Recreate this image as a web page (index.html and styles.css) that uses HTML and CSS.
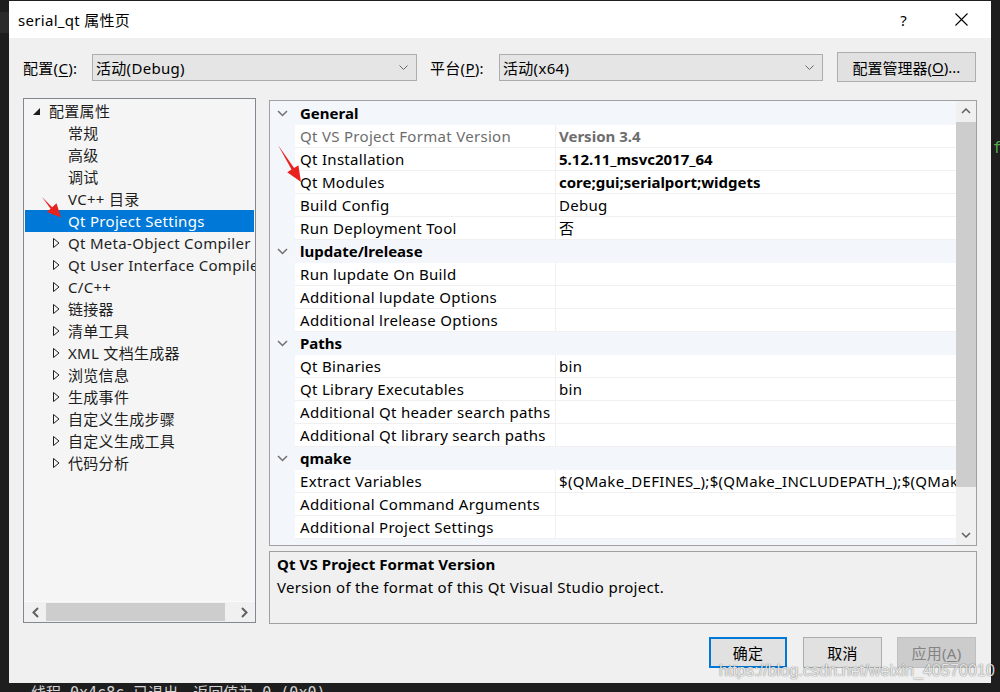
FILE: index.html
```html
<!DOCTYPE html>
<html lang="zh-CN">
<head>
<meta charset="utf-8">
<title>serial_qt 属性页</title>
<link rel="stylesheet" href="styles.css">
</head>
<body>
<div class="screen">
  <div class="edge-left"><div class="edge-left-hi"></div></div>
  <div class="dialog">
    <div class="titlebar">
      <span class="title">serial_qt 属性页</span>
      <span class="help">?</span>
      <svg class="close" width="13" height="13" viewBox="0 0 13 13"><path d="M0.5 0.5L12.5 12.5M12.5 0.5L0.5 12.5" stroke="#000" stroke-width="1.1" fill="none"/></svg>
    </div>
    <div class="content">
      <div class="config-row">
        <span class="lbl">配置(<u>C</u>):</span>
        <div class="combo combo-cfg"><span class="combo-text">活动(Debug)</span><svg width="9" height="5" viewBox="0 0 9 5"><path d="M0.5 0.5L4.5 4.5L8.5 0.5" fill="none" stroke="#6a6a6a" stroke-width="1"/></svg></div>
        <span class="lbl lbl-plat">平台(<u>P</u>):</span>
        <div class="combo combo-plat"><span class="combo-text">活动(x64)</span><svg width="9" height="5" viewBox="0 0 9 5"><path d="M0.5 0.5L4.5 4.5L8.5 0.5" fill="none" stroke="#6a6a6a" stroke-width="1"/></svg></div>
        <div class="btn btn-mgr">配置管理器(<u>O</u>)...</div>
      </div>

      <div class="main">
        <div class="tree">
          <div class="tree-items">
            <div class="trow root"><span class="exp"><svg width="7" height="7" viewBox="0 0 7 7"><polygon points="7,0 7,7 0,7" fill="#1e1e1e"/></svg></span><span>配置属性</span></div>
            <div class="trow child"><span class="exp"></span><span>常规</span></div>
            <div class="trow child"><span class="exp"></span><span>高级</span></div>
            <div class="trow child"><span class="exp"></span><span>调试</span></div>
            <div class="trow child"><span class="exp"></span><span>VC++ 目录</span></div>
            <div class="trow child selected"><span class="exp"></span><span>Qt Project Settings</span></div>
            <div class="trow child"><span class="exp"><svg width="7" height="10" viewBox="0 0 7 10"><polygon points="0.5,0.5 6,5 0.5,9.5" fill="none" stroke="#1e1e1e" stroke-width="1"/></svg></span><span>Qt Meta-Object Compiler</span></div>
            <div class="trow child"><span class="exp"><svg width="7" height="10" viewBox="0 0 7 10"><polygon points="0.5,0.5 6,5 0.5,9.5" fill="none" stroke="#1e1e1e" stroke-width="1"/></svg></span><span>Qt User Interface Compiler</span></div>
            <div class="trow child"><span class="exp"><svg width="7" height="10" viewBox="0 0 7 10"><polygon points="0.5,0.5 6,5 0.5,9.5" fill="none" stroke="#1e1e1e" stroke-width="1"/></svg></span><span>C/C++</span></div>
            <div class="trow child"><span class="exp"><svg width="7" height="10" viewBox="0 0 7 10"><polygon points="0.5,0.5 6,5 0.5,9.5" fill="none" stroke="#1e1e1e" stroke-width="1"/></svg></span><span>链接器</span></div>
            <div class="trow child"><span class="exp"><svg width="7" height="10" viewBox="0 0 7 10"><polygon points="0.5,0.5 6,5 0.5,9.5" fill="none" stroke="#1e1e1e" stroke-width="1"/></svg></span><span>清单工具</span></div>
            <div class="trow child"><span class="exp"><svg width="7" height="10" viewBox="0 0 7 10"><polygon points="0.5,0.5 6,5 0.5,9.5" fill="none" stroke="#1e1e1e" stroke-width="1"/></svg></span><span>XML 文档生成器</span></div>
            <div class="trow child"><span class="exp"><svg width="7" height="10" viewBox="0 0 7 10"><polygon points="0.5,0.5 6,5 0.5,9.5" fill="none" stroke="#1e1e1e" stroke-width="1"/></svg></span><span>浏览信息</span></div>
            <div class="trow child"><span class="exp"><svg width="7" height="10" viewBox="0 0 7 10"><polygon points="0.5,0.5 6,5 0.5,9.5" fill="none" stroke="#1e1e1e" stroke-width="1"/></svg></span><span>生成事件</span></div>
            <div class="trow child"><span class="exp"><svg width="7" height="10" viewBox="0 0 7 10"><polygon points="0.5,0.5 6,5 0.5,9.5" fill="none" stroke="#1e1e1e" stroke-width="1"/></svg></span><span>自定义生成步骤</span></div>
            <div class="trow child"><span class="exp"><svg width="7" height="10" viewBox="0 0 7 10"><polygon points="0.5,0.5 6,5 0.5,9.5" fill="none" stroke="#1e1e1e" stroke-width="1"/></svg></span><span>自定义生成工具</span></div>
            <div class="trow child"><span class="exp"><svg width="7" height="10" viewBox="0 0 7 10"><polygon points="0.5,0.5 6,5 0.5,9.5" fill="none" stroke="#1e1e1e" stroke-width="1"/></svg></span><span>代码分析</span></div>
          </div>
          <div class="hscroll">
            <div class="sbtn"><svg width="7" height="11" viewBox="0 0 7 11"><path d="M6 1L1.5 5.5L6 10" fill="none" stroke="#606060" stroke-width="2"/></svg></div>
            <div class="hthumb"></div>
            <div class="hspace"></div>
            <div class="sbtn"><svg width="7" height="11" viewBox="0 0 7 11"><path d="M1 1L5.5 5.5L1 10" fill="none" stroke="#606060" stroke-width="2"/></svg></div>
          </div>
        </div>

        <div class="right">
          <div class="grid">
            <div class="grid-rows">
              <div class="cat"><span class="gut"><svg width="11" height="7" viewBox="0 0 11 7"><path d="M1 1L5.5 5.5L10 1" fill="none" stroke="#717171" stroke-width="1.5"/></svg></span><span class="cat-name">General</span></div>
              <div class="prop ro"><span class="gut"></span><span class="name">Qt VS Project Format Version</span><span class="val b">Version 3.4</span></div>
              <div class="prop"><span class="gut"></span><span class="name">Qt Installation</span><span class="val b">5.12.11_msvc2017_64</span></div>
              <div class="prop"><span class="gut"></span><span class="name">Qt Modules</span><span class="val b">core;gui;serialport;widgets</span></div>
              <div class="prop"><span class="gut"></span><span class="name">Build Config</span><span class="val">Debug</span></div>
              <div class="prop"><span class="gut"></span><span class="name">Run Deployment Tool</span><span class="val">否</span></div>

              <div class="cat"><span class="gut"><svg width="11" height="7" viewBox="0 0 11 7"><path d="M1 1L5.5 5.5L10 1" fill="none" stroke="#717171" stroke-width="1.5"/></svg></span><span class="cat-name">lupdate/lrelease</span></div>
              <div class="prop"><span class="gut"></span><span class="name">Run lupdate On Build</span><span class="val"></span></div>
              <div class="prop"><span class="gut"></span><span class="name">Additional lupdate Options</span><span class="val"></span></div>
              <div class="prop"><span class="gut"></span><span class="name">Additional lrelease Options</span><span class="val"></span></div>

              <div class="cat"><span class="gut"><svg width="11" height="7" viewBox="0 0 11 7"><path d="M1 1L5.5 5.5L10 1" fill="none" stroke="#717171" stroke-width="1.5"/></svg></span><span class="cat-name">Paths</span></div>
              <div class="prop"><span class="gut"></span><span class="name">Qt Binaries</span><span class="val">bin</span></div>
              <div class="prop"><span class="gut"></span><span class="name">Qt Library Executables</span><span class="val">bin</span></div>
              <div class="prop"><span class="gut"></span><span class="name">Additional Qt header search paths</span><span class="val"></span></div>
              <div class="prop"><span class="gut"></span><span class="name">Additional Qt library search paths</span><span class="val"></span></div>

              <div class="cat"><span class="gut"><svg width="11" height="7" viewBox="0 0 11 7"><path d="M1 1L5.5 5.5L10 1" fill="none" stroke="#717171" stroke-width="1.5"/></svg></span><span class="cat-name">qmake</span></div>
              <div class="prop"><span class="gut"></span><span class="name">Extract Variables</span><span class="val">$(QMake_DEFINES_);$(QMake_INCLUDEPATH_);$(QMake_LIBS_)</span></div>
              <div class="prop"><span class="gut"></span><span class="name">Additional Command Arguments</span><span class="val"></span></div>
              <div class="prop"><span class="gut"></span><span class="name">Additional Project Settings</span><span class="val"></span></div>

              <div class="cat"><span class="gut"><svg width="11" height="7" viewBox="0 0 11 7"><path d="M1 1L5.5 5.5L10 1" fill="none" stroke="#717171" stroke-width="1.5"/></svg></span><span class="cat-name">QML</span></div>
            </div>
            <div class="vscroll">
              <div class="vbtn"><svg width="10" height="6" viewBox="0 0 10 6"><path d="M1 5L5 1L9 5" fill="none" stroke="#606060" stroke-width="1.5"/></svg></div>
              <div class="vthumb"></div>
              <div class="vspace"></div>
              <div class="vbtn"><svg width="10" height="6" viewBox="0 0 10 6"><path d="M1 1L5 5L9 1" fill="none" stroke="#606060" stroke-width="1.5"/></svg></div>
            </div>
          </div>
          <div class="desc">
            <div class="desc-title">Qt VS Project Format Version</div>
            <div class="desc-text">Version of the format of this Qt Visual Studio project.</div>
          </div>
        </div>
      </div>

      <div class="buttons">
        <div class="btn btn-ok">确定</div>
        <div class="btn btn-cancel">取消</div>
        <div class="btn btn-apply">应用(<u>A</u>)</div>
      </div>
    </div>
  </div>
  <div class="edge-right"><span class="code-f">f</span></div>
</div>
<div class="console"><span class="console-text">线程 0x4c8c 已退出，返回值为 0 (0x0)。</span></div>

<svg class="arrows" width="1000" height="692" viewBox="0 0 1000 692">
  <polygon points="42,197 52.2,207.2 56.5,203.2 61,217.5 46.8,212 50.6,208.7" fill="#e8231f"/>
  <polygon points="278,145 294.1,168 298.4,165.3 301,182 287.2,172.3 291.5,169.6" fill="#e8231f"/>
</svg>
<div class="watermark">https://blog.csdn.net/weixin_40570010</div>
</body>
</html>
```

FILE: styles.css
```css
* { box-sizing: border-box; }
html, body { margin: 0; padding: 0; }
body {
  width: 1000px;
  height: 692px;
  overflow: hidden;
  position: relative;
  background: #1e1e1e;
  font-family: "Noto Sans", "Open Sans", "Noto Sans CJK SC", sans-serif;
  font-size: 15px;
  letter-spacing: 0.3px;
  color: #000;
}
u { text-decoration: underline; text-underline-offset: 2px; }

.screen { display: flex; height: 683px; }
.edge-left { width: 9px; background: #1e1e1e; padding-top: 12px; }
.edge-left-hi { height: 21px; background: #2b2b2b; }
.edge-right { width: 9px; background: #1e1e1e; position: relative; overflow: hidden; padding-top: 139px; }
.code-f { display: block; font-family: "Liberation Mono", monospace; font-size: 16px; color: #57a64a; line-height: 20px; padding-left: 2px; }

.dialog {
  width: 982px;
  height: 682px;
  margin-top: 1px;
  display: flex;
  flex-direction: column;
  background: #f0f0f0;
}
.titlebar {
  height: 37px;
  flex: none;
  background: #fff;
  display: flex;
  align-items: center;
  padding-left: 9px;
  padding-right: 23px;
}
.title { flex: 1; font-size: 15px; }
.help { font-size: 15px; margin-right: 48px; color: #000; }
.close { display: block; }

.content { flex: 1; display: flex; flex-direction: column; }

.config-row {
  display: flex;
  align-items: center;
  padding: 14px 15px 0 14px;
  height: 44px;
}
.lbl { width: 69px; white-space: nowrap; }
.lbl-plat { margin-left: 13px; }
.combo {
  height: 27px;
  border: 1px solid #adadad;
  background: #e5e5e5;
  display: flex;
  align-items: center;
  padding: 0 8px 0 3px;
}
.combo-text { flex: 1; }
.combo-cfg { width: 325px; }
.combo-plat { width: 324px; }
.btn {
  display: flex;
  align-items: center;
  justify-content: center;
  background: #e1e1e1;
  border: 1px solid #adadad;
  white-space: nowrap;
}
.btn-mgr { width: 139px; height: 30px; margin-left: 14px; letter-spacing: 0; }

.main {
  display: flex;
  gap: 13px;
  padding: 0 14px;
  margin-top: 16px;
  height: 526px;
}

.tree {
  width: 233px;
  height: 525px;
  border: 1px solid #828790;
  background: #f5f5f5;
  display: flex;
  flex-direction: column;
}
.tree-items {
  flex: 1;
  overflow: hidden;
  padding: 1px 1px 0;
  white-space: nowrap;
}
.trow {
  height: 22px;
  line-height: 22px;
  display: flex;
  align-items: center;
  color: #1e1e1e;
}
.trow .exp { flex: none; display: flex; align-items: center; }
.root { padding-left: 8px; }
.root .exp { width: 16px; }
.child { padding-left: 28px; }
.child .exp { width: 15px; }
.selected { background: #0078d7; color: #fff; }

.hscroll {
  height: 21px;
  flex: none;
  display: flex;
  padding: 1px 0;
  background: #f0f0f0;
  border-top: 1px solid #fafafa;
}
.sbtn { width: 22px; display: flex; align-items: center; justify-content: center; }
.hthumb { width: 179px; background: #cdcdcd; }
.hspace { flex: 1; }

.right { width: 708px; display: flex; flex-direction: column; }
.grid {
  margin-top: 2px;
  height: 446px;
  border: 1px solid #a0a0a0;
  display: flex;
  background: #fff;
}
.grid-rows {
  flex: 1;
  overflow: hidden;
  padding-top: 1px;
  background: #f3f6fa;
}
.cat {
  height: 23px;
  display: flex;
  align-items: center;
  background: #f3f6fa;
  font-weight: bold;
  letter-spacing: 0;
}
.gut { width: 25px; flex: none; display: flex; align-items: center; justify-content: center; }
.cat-name { padding-left: 5px; line-height: 22px; padding-bottom: 2px; }
.prop { height: 23px; display: flex; }
.prop .name {
  width: 261px;
  flex: none;
  background: #fff;
  border-right: 1px solid #f0f0f0;
  border-bottom: 1px solid #f0f0f0;
  padding-left: 5px;
  line-height: 22px;
  white-space: nowrap;
  overflow: hidden;
}
.prop .val {
  flex: 1;
  background: #fff;
  border-bottom: 1px solid #f0f0f0;
  padding-left: 3px;
  line-height: 22px;
  white-space: nowrap;
  overflow: hidden;
}
.val.b { font-weight: bold; letter-spacing: 0; }
.ro .name, .ro .val { color: #6d6d6d; }

.vscroll { width: 20px; flex: none; background: #f0f0f0; display: flex; flex-direction: column; }
.vbtn { height: 20px; display: flex; align-items: center; justify-content: center; }
.vthumb { margin-top: 1px; height: 365px; background: #cdcdcd; }
.vspace { flex: 1; }

.desc {
  margin-top: 5px;
  height: 73px;
  border: 1px solid #a0a0a0;
  background: #f0f0f0;
  padding: 1px 7px;
  line-height: 23px;
}
.desc-title { font-weight: bold; letter-spacing: 0.1px; }

.buttons {
  display: flex;
  justify-content: flex-end;
  padding-right: 15px;
  margin-top: 13px;
}
.buttons .btn { height: 31px; }
.btn-ok { width: 78px; border: 2px solid #0078d7; }
.btn-cancel { width: 79px; margin-left: 16px; }
.btn-apply { width: 79px; margin-left: 15px; background: #cccccc; border-color: #bfbfbf; color: #838383; }

.console {
  height: 9px;
  overflow: hidden;
  background: #1e1e1e;
  color: #d4d4d4;
  padding-left: 31px;
  padding-top: 3px;
  font-family: "DejaVu Sans Mono", "Noto Sans CJK SC", monospace;
  font-size: 15px;
  line-height: 15px;
  letter-spacing: 0;
  white-space: nowrap;
}

.arrows { position: absolute; left: 0; top: 0; pointer-events: none; }
.watermark {
  position: absolute;
  left: 719px;
  top: 662px;
  font-family: "Liberation Sans", Arial, sans-serif;
  font-size: 16px;
  letter-spacing: 0.1px;
  color: rgba(255, 255, 255, 0.85);
  text-shadow: 0 0 1px rgba(0, 0, 0, 0.55), 0 0 2px rgba(0, 0, 0, 0.2);
  white-space: nowrap;
  pointer-events: none;
}
```
